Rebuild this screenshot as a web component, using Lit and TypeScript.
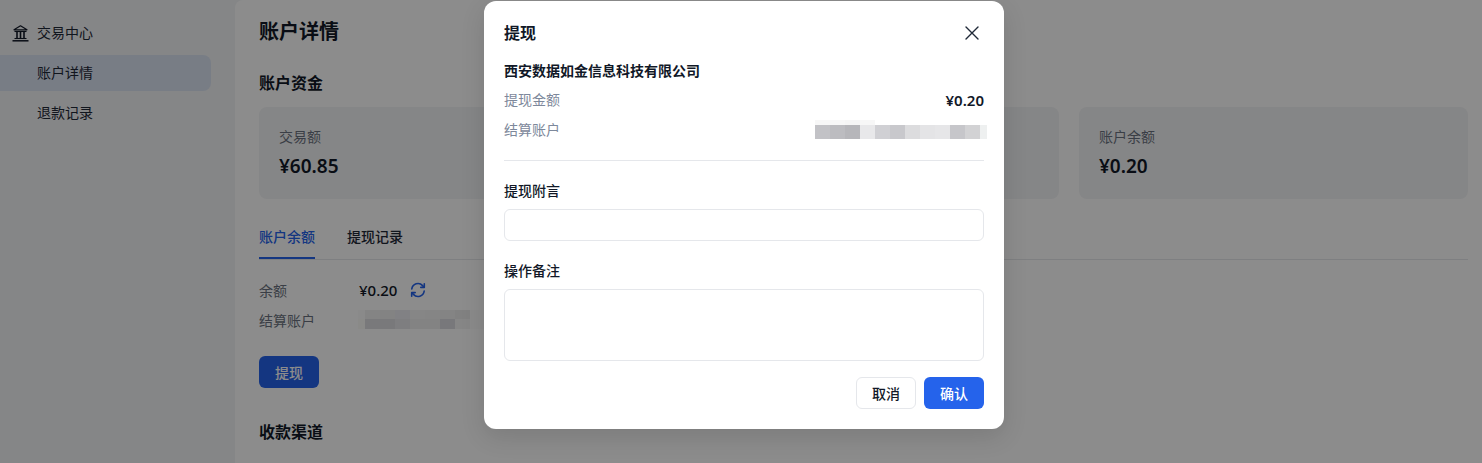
import { LitElement, html, css } from "lit";
import { customElement } from "lit/decorators.js";

type Cell = [number, string];

const modalTop: Cell[] = [[15, "#f7f7f7"], [15, "#f7f7f7"], [15, "#f5f5f5"], [15, "#f7f7f7"]];
const modalBottom: Cell[] = [
  [15, "#c2c2c6"], [15, "#bcbcc0"], [15, "#b6b6ba"], [15, "#e8e8ea"], [15, "#d0d0d4"], [15, "#c8c8cc"],
  [15, "#dcdcde"], [15, "#e4e4e6"], [15, "#e6e6e8"], [15, "#c6c6ca"], [15, "#d2d2d4"], [7, "#eef0f0"],
];
const bgTop: Cell[] = [
  [7, "#fbfbfb"], [15, "#f0f0f0"], [15, "#eeeeee"], [15, "#ececf1"], [15, "#f5f5f5"],
  [15, "#f2f2f2"], [15, "#f0f0f0"], [15, "#ececec"], [14, "#fbfbfb"],
];
const bgBottom: Cell[] = [
  [7, "#fbfbf7"], [15, "#dcdce0"], [15, "#dcdce0"], [15, "#e5e5e9"], [15, "#eeeeee"],
  [15, "#eeeeee"], [15, "#dadae1"], [15, "#f4f4f4"], [14, "#fbfbfb"],
];

@customElement("app-root")
export class AppRoot extends LitElement {
  static styles = css`
    :host { display: block; height: 100vh; overflow: hidden; position: relative; font-family: "Noto Sans", "Noto Sans CJK SC", sans-serif; color: #111827; font-size: 14px; }
    .page { display: flex; height: 463px; background: #f3f4f6; }
    .side { width: 235px; flex: none; padding-top: 15px; box-sizing: border-box; }
    .side-item { height: 36px; width: 211px; display: flex; align-items: center; padding-left: 37px; box-sizing: border-box; margin-bottom: 4px; border-radius: 0 8px 8px 0; line-height: 20px; color: #1f2937; position: relative; }
    .side-item.active { background: #dbe4f3; }
    .bank { position: absolute; left: 12px; top: 10px; }
    .main { flex: 1; background: #fff; border-top-left-radius: 8px; padding: 20px 14px 0 24px; min-width: 0; }
    h1 { margin: 0; font-size: 20px; line-height: 24px; font-weight: 700; height: 24px; }
    h2 { margin: 0; font-size: 16px; line-height: 24px; font-weight: 700; }
    .sec1 { margin-top: 27px; }
    .cards { display: grid; grid-template-columns: 253fr 253fr 254fr 389fr; gap: 20px; margin-top: 12px; }
    .card { height: 92px; background: #f3f4f6; border-radius: 8px; padding: 20px; box-sizing: border-box; }
    .card .label { font-size: 14px; line-height: 20px; color: #6b7280; }
    .card .value { font-size: 19px; line-height: 28px; font-weight: 600; margin-top: 5px; color: #111827; }
    .tabs { display: flex; gap: 32px; margin-top: 22px; border-bottom: 1px solid #e5e7eb; height: 38px; }
    .tab { line-height: 32px; height: 38px; box-sizing: border-box; color: #1f2937; font-weight: 500; }
    .tab.on { color: #2563eb; border-bottom: 2px solid #2563eb; }
    .kv { display: flex; align-items: center; height: 30px; }
    .kv .k { width: 100px; color: #6b7280; }
    .kv .v { font-weight: 500; font-size: 15px; }
    .kv .mosaic { align-self: flex-start; margin: 5px 0 0 -1px; }
    .kvs { margin-top: 15px; }
    .refresh { margin-left: 13px; }
    .mosaic { display: flex; flex-direction: column; }
    .mrow { display: flex; }
    .mrow i { display: block; flex: none; }
    .btn-main { width: 60px; height: 32px; border-radius: 6px; border: 0; padding: 0; background: #2563eb; color: #fff; font: inherit; font-weight: 500; margin-top: 21px; display: block; }
    .sec3 { margin-top: 32px; }

    .overlay { position: absolute; inset: 0; background: rgba(0,0,0,.45); display: flex; justify-content: center; align-items: flex-start; padding: 1px 0 0 6px; }
    .modal { width: 520px; height: 428px; box-sizing: border-box; background: #fff; border-radius: 12px; padding: 20px; box-shadow: 0 8px 24px rgba(0,0,0,.12); }
    .m-head { display: flex; justify-content: space-between; align-items: center; height: 24px; }
    .m-title { font-size: 16px; font-weight: 600; line-height: 24px; color: #111827; }
    .close { display: block; margin-right: 4px; }
    .company { font-weight: 600; line-height: 20px; margin-top: 16px; color: #111827; }
    .m-kv { display: flex; justify-content: space-between; align-items: center; height: 20px; margin-top: 10px; color: #7d889b; line-height: 20px; }
    .m-kv.first { margin-top: 9px; }
    .m-kv b { color: #111827; font-weight: 600; font-size: 15px; }
    .m-kv .mosaic { align-self: flex-start; margin-right: -3px; }
    hr { border: 0; border-top: 1px solid #e5e7eb; margin: 20px 0 0; }
    label { display: block; font-weight: 500; line-height: 20px; color: #111827; }
    .f1 { margin-top: 20px; }
    .f2 { margin-top: 20px; }
    .input { height: 32px; box-sizing: border-box; margin-top: 8px; border: 1px solid #e5e7eb; border-radius: 6px; }
    .area { height: 72px; }
    .m-foot { display: flex; justify-content: flex-end; gap: 8px; margin-top: 16px; }
    .m-foot button { width: 60px; height: 32px; border-radius: 6px; font: inherit; padding: 0; font-weight: 500; }
    .cancel { background: #fff; border: 1px solid #e5e7eb; color: #111827; }
    .ok { background: #2563eb; border: 0; color: #fff; }
  `;

  private mosaic(top: Cell[], bottom: Cell[], h1: number, h2: number) {
    const row = (cells: Cell[], h: number) =>
      html`<div class="mrow" style="height:${h}px">${cells.map(([w, c]) => html`<i style="width:${w}px;background:${c}"></i>`)}</div>`;
    return html`<div class="mosaic">${row(top, h1)}${row(bottom, h2)}</div>`;
  }

  render() {
    const cards = [["交易额", "¥60.85"], ["", ""], ["", ""], ["账户余额", "¥0.20"]];
    return html`
      <div class="page">
        <aside class="side">
          <div class="side-item">
            <svg class="bank" width="17" height="17" viewBox="0 0 17 17" fill="none" stroke="#111827">
              <path d="M8.5 0.8 L15 4.8 H2 Z" stroke-width="1.2" stroke-linejoin="round"/>
              <path d="M2.5 6.5 H14.5" stroke-width="1.1"/>
              <path d="M5 7 V13 M8.5 7 V13 M12 7 V13" stroke-width="1.6"/>
              <path d="M2.5 13.5 H14.5" stroke-width="1.1"/>
              <path d="M0.5 15.8 H16.5" stroke-width="1.5"/>
            </svg>
            交易中心
          </div>
          <div class="side-item active">账户详情</div>
          <div class="side-item">退款记录</div>
        </aside>
        <main class="main">
          <h1>账户详情</h1>
          <h2 class="sec1">账户资金</h2>
          <div class="cards">
            ${cards.map(([l, v]) => html`<div class="card"><div class="label">${l}</div><div class="value">${v}</div></div>`)}
          </div>
          <div class="tabs">
            <div class="tab on">账户余额</div>
            <div class="tab">提现记录</div>
          </div>
          <div class="kvs">
            <div class="kv">
              <span class="k">余额</span><span class="v">¥0.20</span>
              <svg class="refresh" width="16" height="16" viewBox="0 0 16 16" fill="none" stroke="#2563eb" stroke-width="1.6" stroke-linecap="round" stroke-linejoin="round">
                <path d="M1.8 7 A6.2 6.2 0 0 1 12.6 3.6 L14 5.2"/>
                <path d="M14.3 1.8 V5.4 H10.8"/>
                <path d="M14.2 9 A6.2 6.2 0 0 1 3.4 12.4 L2 10.8"/>
                <path d="M1.7 14.2 V10.6 H5.2"/>
              </svg>
            </div>
            <div class="kv">
              <span class="k">结算账户</span>
              ${this.mosaic(bgTop, bgBottom, 9, 10)}
            </div>
          </div>
          <button class="btn-main">提现</button>
          <h2 class="sec3">收款渠道</h2>
        </main>
      </div>
      <div class="overlay">
        <div class="modal">
          <div class="m-head">
            <span class="m-title">提现</span>
            <svg class="close" width="16" height="16" viewBox="0 0 16 16" fill="none" stroke="#1f2937" stroke-width="1.4" stroke-linecap="round"><path d="M2 2 L14 14 M14 2 L2 14"/></svg>
          </div>
          <div class="company">西安数据如金信息科技有限公司</div>
          <div class="m-kv first"><span>提现金额</span><b>¥0.20</b></div>
          <div class="m-kv"><span>结算账户</span>${this.mosaic(modalTop, modalBottom, 5, 14)}</div>
          <hr />
          <div class="f1"><label>提现附言</label><div class="input"></div></div>
          <div class="f2"><label>操作备注</label><div class="input area"></div></div>
          <div class="m-foot"><button class="cancel">取消</button><button class="ok">确认</button></div>
        </div>
      </div>
    `;
  }
}
